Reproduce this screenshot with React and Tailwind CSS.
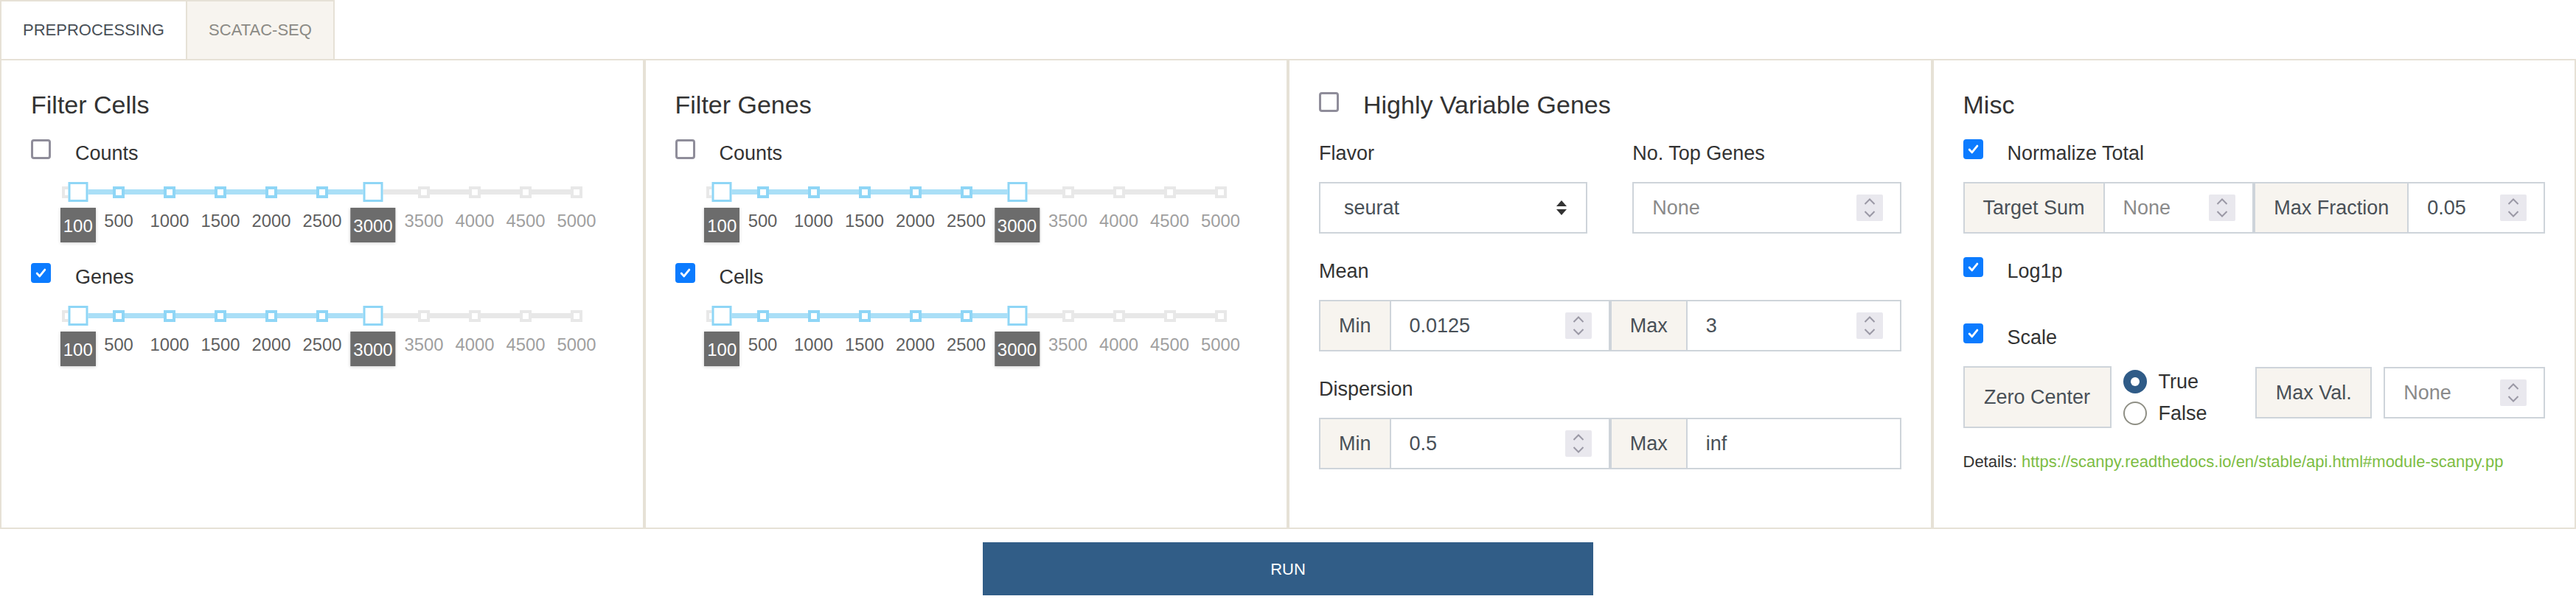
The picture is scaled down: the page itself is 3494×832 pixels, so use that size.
import React from 'react';

const TICKS = [0, 500, 1000, 1500, 2000, 2500, 3000, 3500, 4000, 4500, 5000];

// slider scale: 0..5000 over 690px, 8px inset on each side
const pos = (v) => 8 + (v / 5000) * 690;

function Checkbox({ checked }) {
  if (checked) {
    return (
      <span className="flex h-[27px] w-[27px] shrink-0 items-center justify-center rounded-[4px] bg-[#0b7bff]">
        <svg viewBox="0 0 16 16" className="h-[19px] w-[19px]">
          <path d="M3.5 8.5l3 3.2 6-7.4" fill="none" stroke="white" strokeWidth="2.4" strokeLinecap="round" strokeLinejoin="round" />
        </svg>
      </span>
    );
  }
  return <span className="block h-[27px] w-[27px] shrink-0 rounded-[4px] border-[3px] border-[#8f8d9a] bg-white" />;
}

function CheckRow({ checked, label, className = '' }) {
  return (
    <div className={`flex items-start gap-[33px] ${className}`}>
      <Checkbox checked={checked} />
      <span className="text-[27px] leading-[38px] text-[#333]">{label}</span>
    </div>
  );
}

function RangeSlider({ low = 100, high = 3000 }) {
  return (
    <div className="relative ml-[42px] mt-[20px] h-[82px] w-[705px]">
      <div className="absolute left-0 right-0 top-[10px] h-[7px] bg-[#e8e8e8]" />
      <div
        className="absolute top-[10px] h-[7px] bg-[#aadff7]"
        style={{ left: pos(low), width: pos(high) - pos(low) }}
      />
      {TICKS.map((t) => (
        <span
          key={t}
          className={`absolute top-[5.5px] h-[16px] w-[16px] -translate-x-1/2 border-[4px] bg-white ${
            t >= low && t <= high ? 'border-[#8fd6f6]' : 'border-[#e8e8e8]'
          }`}
          style={{ left: pos(t) }}
        />
      ))}
      {[low, high].map((v) => (
        <span
          key={v}
          className="absolute top-0 h-[27px] w-[27px] -translate-x-1/2 border-[3px] border-[#8fd6f6] bg-white"
          style={{ left: pos(v) }}
        />
      ))}
      {TICKS.filter((t) => t > 0 && t !== low && t !== high).map((t) => (
        <span
          key={t}
          className={`absolute top-[35px] -translate-x-1/2 text-[23.8px] leading-[36px] ${
            t >= low && t <= high ? 'text-[#5f5f5f]' : 'text-[#a0a0a0]'
          }`}
          style={{ left: pos(t) }}
        >
          {t}
        </span>
      ))}
      {[low, high].map((v) => (
        <span
          key={`box-${v}`}
          className="absolute top-[35px] flex h-[47px] -translate-x-1/2 items-center justify-center bg-[#6c6c6c] px-[4px] pt-[3px] text-[24px] text-white shadow-[0_1px_4px_rgba(0,0,0,0.18)]"
          style={{ left: pos(v) }}
        >
          {v}
        </span>
      ))}
    </div>
  );
}

function Spinner() {
  return (
    <span className="flex h-[36px] w-[36px] shrink-0 items-center justify-center rounded-[2px] bg-[#e9e8ee]">
      <svg viewBox="0 0 36 36" className="h-[36px] w-[36px]">
        <path d="M11.5 13L18 6.5L24.5 13" fill="none" stroke="#9a98a5" strokeWidth="2" />
        <path d="M11.5 23L18 29.5L24.5 23" fill="none" stroke="#9a98a5" strokeWidth="2" />
      </svg>
    </span>
  );
}

function NumberField({ value, placeholder, spinner = true }) {
  return (
    <div className="flex flex-1 items-center justify-between bg-white pl-[25px] pr-[23px]">
      <span className={value ? 'text-[#495057]' : 'text-[#8a8a8a]'}>{value || placeholder}</span>
      {spinner && <Spinner />}
    </div>
  );
}

function InputGroup({ addon, value, placeholder, spinner = true }) {
  return (
    <div className="flex h-[70px] border-2 border-[#ced4da] text-[27px]">
      <span className="flex items-center border-r-2 border-[#ced4da] bg-[#f7f4ef] px-[25px] text-[#495057]">{addon}</span>
      <NumberField value={value} placeholder={placeholder} spinner={spinner} />
    </div>
  );
}

function Radio({ checked, label }) {
  return (
    <div className="flex items-center gap-[16px]">
      {checked ? (
        <span className="flex h-[32px] w-[32px] items-center justify-center rounded-full bg-[#2f5b87]">
          <span className="h-[12px] w-[12px] rounded-full bg-white" />
        </span>
      ) : (
        <span className="h-[32px] w-[32px] rounded-full border-2 border-[#8f8f85] bg-white" />
      )}
      <span className="text-[27px] leading-[32px] text-[#333]">{label}</span>
    </div>
  );
}

function Panel({ children }) {
  return <div className="border-2 border-[#e6e1d6] px-[40px] pt-[40px]">{children}</div>;
}

function Heading({ children }) {
  return <h2 className="text-[34px] leading-[40px] text-[#333]">{children}</h2>;
}

function FieldLabel({ children, className = '' }) {
  return <div className={`text-[27px] leading-[32px] text-[#333] ${className}`}>{children}</div>;
}

export default function App() {
  return (
    <div className="min-h-[832px] w-full bg-white font-['Liberation_Sans',Arial,sans-serif]">
      <div className="flex h-[80px]">
        <div className="flex w-[254px] items-center justify-center border-2 border-b-0 border-[#e6e1d6] bg-white pb-[2px] text-[22px] text-[#495057]">
          PREPROCESSING
        </div>
        <div className="flex w-[200px] items-center justify-center border-2 border-b-0 border-l-0 border-[#e6e1d6] bg-[#f7f4ef] pb-[2px] text-[22px] text-[#8b8a85]">
          SCATAC-SEQ
        </div>
      </div>

      <div className="grid h-[638px] grid-cols-4">
        <Panel>
          <Heading>Filter Cells</Heading>
          <CheckRow label="Counts" className="mt-[27px]" />
          <RangeSlider />
          <CheckRow checked label="Genes" className="mt-[28px]" />
          <RangeSlider />
        </Panel>

        <Panel>
          <Heading>Filter Genes</Heading>
          <CheckRow label="Counts" className="mt-[27px]" />
          <RangeSlider />
          <CheckRow checked label="Cells" className="mt-[28px]" />
          <RangeSlider />
        </Panel>

        <Panel>
          <div className="flex items-start gap-[33px]">
            <span className="mt-[3px]">
              <Checkbox />
            </span>
            <Heading>Highly Variable Genes</Heading>
          </div>
          <div className="mt-[30px] grid grid-cols-2 gap-x-[61px]">
            <div>
              <FieldLabel>Flavor</FieldLabel>
              <div className="mt-[23px] flex h-[70px] items-center justify-between border-2 border-[#ced4da] bg-white pl-[32px] pr-[26px] text-[27px] text-[#495057]">
                <span>seurat</span>
                <svg viewBox="0 0 14 20" className="h-[20px] w-[14px]">
                  <path d="M0 8L7 0L14 8Z" fill="#333" />
                  <path d="M0 12L7 20L14 12Z" fill="#333" />
                </svg>
              </div>
            </div>
            <div>
              <FieldLabel>No. Top Genes</FieldLabel>
              <div className="mt-[23px] flex h-[70px] border-2 border-[#ced4da] text-[27px]">
                <NumberField placeholder="None" />
              </div>
            </div>
          </div>
          <FieldLabel className="mt-[35px]">Mean</FieldLabel>
          <div className="mt-[23px] grid grid-cols-2">
            <InputGroup addon="Min" value="0.0125" />
            <InputGroup addon="Max" value="3" />
          </div>
          <FieldLabel className="mt-[35px]">Dispersion</FieldLabel>
          <div className="mt-[23px] grid grid-cols-2">
            <InputGroup addon="Min" value="0.5" />
            <InputGroup addon="Max" value="inf" spinner={false} />
          </div>
        </Panel>

        <Panel>
          <Heading>Misc</Heading>
          <CheckRow checked label="Normalize Total" className="mt-[27px]" />
          <div className="mt-[20px] grid grid-cols-2">
            <InputGroup addon="Target Sum" placeholder="None" />
            <InputGroup addon="Max Fraction" value="0.05" />
          </div>
          <CheckRow checked label="Log1p" className="mt-[32px]" />
          <CheckRow checked label="Scale" className="mt-[52px]" />
          <div className="mt-[20px] grid grid-cols-2">
            <div className="flex items-start gap-[16px]">
              <div className="flex h-[84px] w-[201px] items-center justify-center border-2 border-[#ced4da] bg-[#f7f4ef] text-[27px] text-[#495057]">
                Zero Center
              </div>
              <div className="flex flex-col gap-[11px] pt-[5px]">
                <Radio checked label="True" />
                <Radio label="False" />
              </div>
            </div>
            <div className="mt-[1px] flex items-start gap-[16px] pl-[2px]">
              <div className="flex h-[70px] w-[158px] items-center justify-center border-2 border-[#ced4da] bg-[#f7f4ef] text-[27px] text-[#495057]">
                Max Val.
              </div>
              <div className="flex h-[70px] flex-1 border-2 border-[#ced4da] text-[27px]">
                <NumberField placeholder="None" />
              </div>
            </div>
          </div>
          <p className="mt-[31px] whitespace-nowrap text-[22px] leading-[30px] text-[#333]">
            Details: <span className="text-[#7dbd44]">https://scanpy.readthedocs.io/en/stable/api.html#module-scanpy.pp</span>
          </p>
        </Panel>
      </div>

      <button className="mx-auto mt-[18px] flex h-[72px] w-[828px] items-center justify-center bg-[#315d87] text-[22px] text-white">
        RUN
      </button>
    </div>
  );
}
